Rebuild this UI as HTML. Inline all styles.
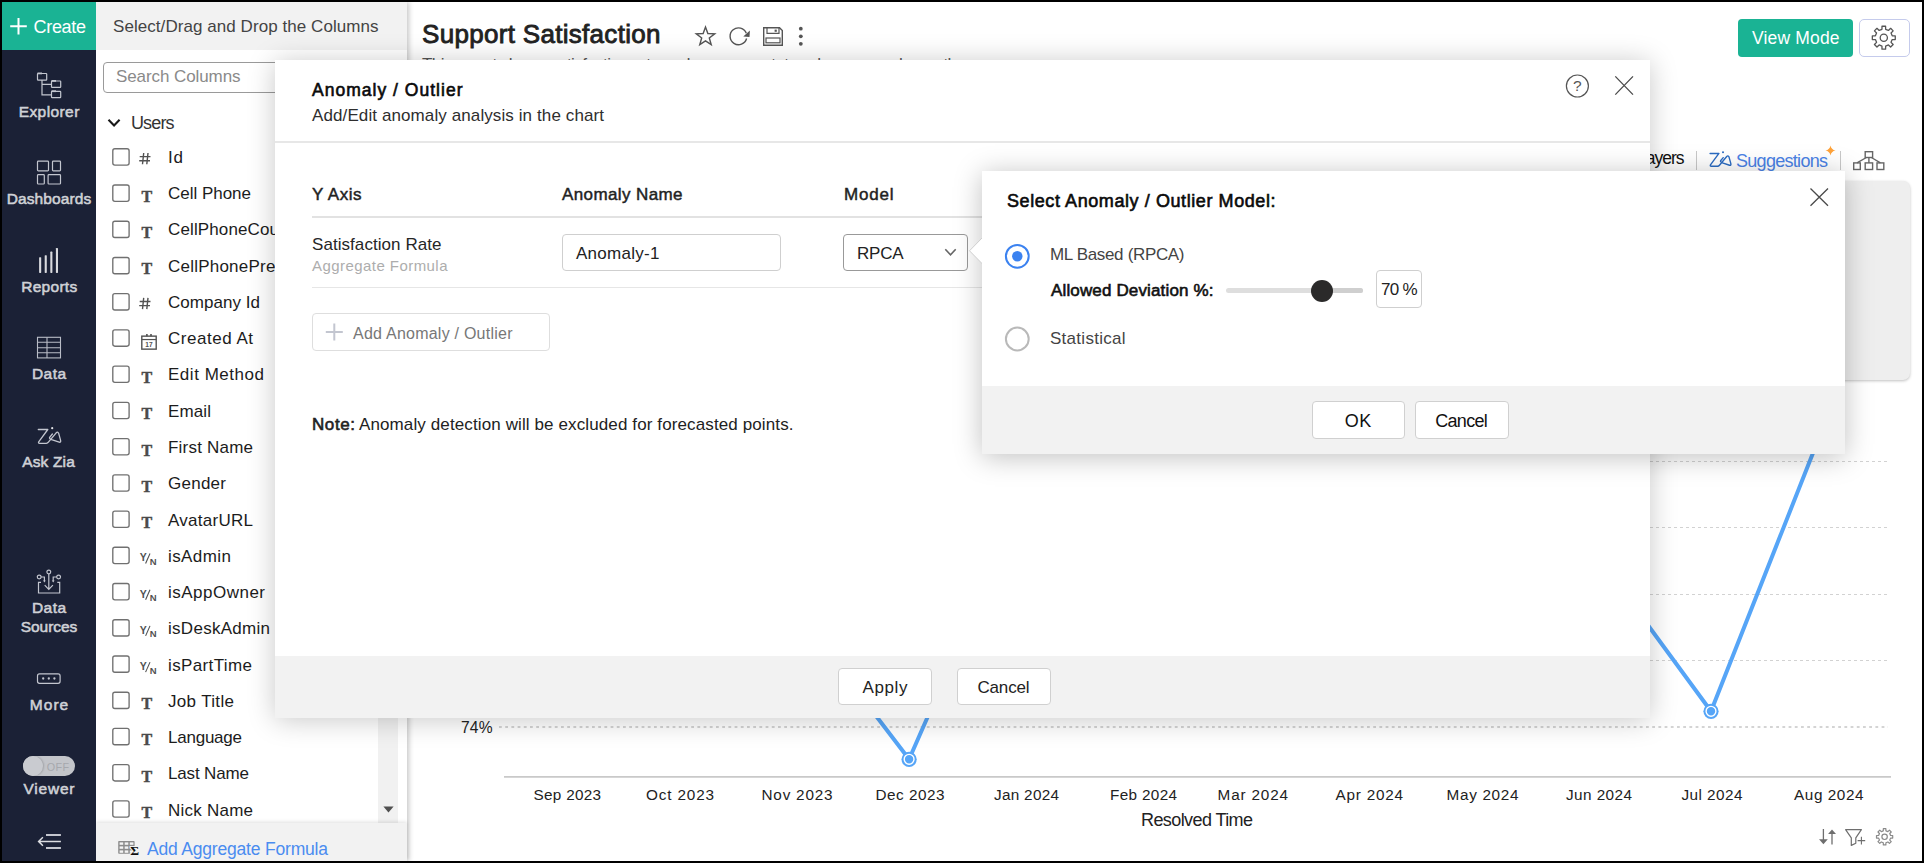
<!DOCTYPE html><html><head><meta charset="utf-8"><title>Support Satisfaction</title><style>
html,body{margin:0;padding:0;}
body{width:1924px;height:863px;overflow:hidden;background:#fff;font-family:"Liberation Sans", sans-serif;position:relative;}
#root{position:absolute;left:0;top:0;width:1924px;height:863px;overflow:hidden;}
svg.tx{position:absolute;left:0;top:0;pointer-events:none;font-family:"Liberation Sans", sans-serif;}
</style></head><body><div id="root">
<svg class="tx" width="1924" height="863" viewBox="0 0 1924 863" fill="none"><text x="422" y="43" font-size="26" fill="#222" textLength="238.5" lengthAdjust="spacing" stroke="#222" stroke-width="0.85">Support Satisfaction</text>
<text x="422" y="70" font-size="17" fill="#555" textLength="535" lengthAdjust="spacing">This report shows satisfaction rate and response status changes each month</text>
<path d="M705.50 27.10 L707.85 33.56 L714.73 33.80 L709.30 38.04 L711.20 44.65 L705.50 40.80 L699.80 44.65 L701.70 38.04 L696.27 33.80 L703.15 33.56 Z" stroke="#555" stroke-width="1.4" stroke-linejoin="miter"/>
<path d="M746.3 33.2 A8.4 8.4 0 1 0 746.6 38.5" stroke="#555" stroke-width="1.4"/><path d="M749.9 30.4 L749.5 37 L743.3 36.5 Z" fill="#555"/>
<path d="M763.7 27.7 H779.5 L782.3 30.5 V45.2 H763.7 Z" stroke="#555" stroke-width="1.4"/><path d="M767 27.7 V33.3 H779 V27.7" stroke="#555" stroke-width="1.2"/><rect x="774.6" y="29.6" width="2.2" height="2.2" fill="#555"/><rect x="766" y="38" width="14" height="4.8" stroke="#555" stroke-width="1.2"/>
<circle cx="800.8" cy="28.7" r="1.9" fill="#555"/><circle cx="800.8" cy="36.3" r="1.9" fill="#555"/><circle cx="800.8" cy="43.8" r="1.9" fill="#555"/></svg>
<div style="position:absolute;left:1738px;top:19px;width:115px;height:38px;background:#1ab394;border-radius:4px;"></div>
<svg class="tx" width="1924" height="863" viewBox="0 0 1924 863" fill="none"><text x="1752" y="44" font-size="17.5" fill="#fff" textLength="87.5" lengthAdjust="spacing">View Mode</text></svg>
<div style="position:absolute;left:1859px;top:19px;width:49px;height:36px;border:1px solid #c5cbec;border-radius:5px;background:#fff;"></div>
<svg class="tx" width="1924" height="863" viewBox="0 0 1924 863" fill="none"><path d="M1881.96 29.30 L1882.00 26.24 L1885.60 26.24 L1885.64 29.30 L1888.44 30.46 L1890.63 28.33 L1893.17 30.87 L1891.04 33.06 L1892.20 35.86 L1895.26 35.90 L1895.26 39.50 L1892.20 39.54 L1891.04 42.34 L1893.17 44.53 L1890.63 47.07 L1888.44 44.94 L1885.64 46.10 L1885.60 49.16 L1882.00 49.16 L1881.96 46.10 L1879.16 44.94 L1876.97 47.07 L1874.43 44.53 L1876.56 42.34 L1875.40 39.54 L1872.34 39.50 L1872.34 35.90 L1875.40 35.86 L1876.56 33.06 L1874.43 30.87 L1876.97 28.33 L1879.16 30.46 Z" stroke="#555" stroke-width="1.3" stroke-linejoin="round"/><circle cx="1883.8" cy="37.7" r="3.6" stroke="#555" stroke-width="1.3"/>
<text x="1637" y="164" font-size="17.5" fill="#111" textLength="47.5" lengthAdjust="spacing">Layers</text></svg>
<div style="position:absolute;left:1696px;top:151px;width:1px;height:19px;background:#c8c8c8;"></div>
<svg class="tx" width="1924" height="863" viewBox="0 0 1924 863" fill="none"><g transform="translate(1709.9 151.3) scale(0.93)"><path d="M0.2 2.3 H9.7 L0.6 14.6 Q-0.1 16.1 1.5 16.1 H8.3 Q9.5 16.1 10.3 15 L18.1 5.6 Q19.5 4 20.5 6 L22.5 13.2 Q23 15.4 21.1 15 L13.5 12.5 Q10.9 11.4 11.5 10.2 L14.3 6.8" stroke="#2a6bc2" stroke-width="1.5" stroke-linecap="round" stroke-linejoin="round"/><circle cx="14.1" cy="1" r="1.1" fill="#2a6bc2"/></g>
<text x="1736" y="167" font-size="18" fill="#4a82e6" textLength="92" lengthAdjust="spacing">Suggestions</text>
<path d="M1830.5 145.5 Q1831.3 149.7 1835.5 150.5 Q1831.3 151.3 1830.5 155.5 Q1829.7 151.3 1825.5 150.5 Q1829.7 149.7 1830.5 145.5 Z" fill="#ffa33a"/></svg>
<div style="position:absolute;left:1840px;top:151px;width:1px;height:19px;background:#c8c8c8;"></div>
<svg class="tx" width="1924" height="863" viewBox="0 0 1924 863" fill="none"><g stroke="#666" stroke-width="1.4"><rect x="1865.2" y="151.7" width="7.4" height="5.8"/><rect x="1853.7" y="162.9" width="6.6" height="6.6"/><rect x="1865.2" y="162.9" width="7.4" height="6.6"/><rect x="1877" y="162.9" width="6.8" height="6.6"/><path d="M1868.9 157.5 V162.9 M1866.4 157.5 L1857 162.9 M1871.4 157.5 L1880.4 162.9"/></g></svg>
<div style="position:absolute;left:1700px;top:181px;width:210px;height:199px;background:#eeeeee;border-radius:7px;box-shadow:0 1px 3px rgba(0,0,0,.25);"></div>
<svg class="tx" width="1924" height="863" viewBox="0 0 1924 863" fill="none"><line x1="504" y1="461.5" x2="1888" y2="461.5" stroke="#d2d2d2" stroke-width="1" stroke-dasharray="3 3"/><line x1="504" y1="527.5" x2="1888" y2="527.5" stroke="#d2d2d2" stroke-width="1" stroke-dasharray="3 3"/><line x1="504" y1="594.5" x2="1888" y2="594.5" stroke="#d2d2d2" stroke-width="1" stroke-dasharray="3 3"/><line x1="504" y1="660.5" x2="1888" y2="660.5" stroke="#d2d2d2" stroke-width="1" stroke-dasharray="3 3"/><line x1="499" y1="727" x2="1888" y2="727" stroke="#c6c6c6" stroke-width="1.7" stroke-dasharray="2.8 3.4"/><line x1="504" y1="776.9" x2="1891" y2="776.9" stroke="#c9c9c9" stroke-width="1.8"/><polyline points="797,612.3 909.1,759.3 1026,492.5 1598,557 1711,711.3 1828,415" stroke="#56a5f7" stroke-width="4" fill="none" stroke-linejoin="round"/><circle cx="909.1" cy="759.3" r="7.6" fill="#56a5f7"/><circle cx="909.1" cy="759.3" r="4.9" fill="#56a5f7" stroke="#fff" stroke-width="1.4"/><circle cx="1711" cy="711.3" r="7.6" fill="#56a5f7"/><circle cx="1711" cy="711.3" r="4.9" fill="#56a5f7" stroke="#fff" stroke-width="1.4"/>
<text x="461" y="733" font-size="15.6" fill="#222" textLength="31.5" lengthAdjust="spacing">74%</text>
<text x="567.3" y="800" font-size="15.3" fill="#222" text-anchor="middle" textLength="67.5" lengthAdjust="spacing">Sep 2023</text>
<text x="680" y="800" font-size="15.3" fill="#222" text-anchor="middle" textLength="68" lengthAdjust="spacing">Oct 2023</text>
<text x="797" y="800" font-size="15.3" fill="#222" text-anchor="middle" textLength="71" lengthAdjust="spacing">Nov 2023</text>
<text x="910" y="800" font-size="15.3" fill="#222" text-anchor="middle" textLength="69" lengthAdjust="spacing">Dec 2023</text>
<text x="1026.5" y="800" font-size="15.3" fill="#222" text-anchor="middle" textLength="65" lengthAdjust="spacing">Jan 2024</text>
<text x="1143.5" y="800" font-size="15.3" fill="#222" text-anchor="middle" textLength="67" lengthAdjust="spacing">Feb 2024</text>
<text x="1252.8" y="800" font-size="15.3" fill="#222" text-anchor="middle" textLength="70.5" lengthAdjust="spacing">Mar 2024</text>
<text x="1369.3" y="800" font-size="15.3" fill="#222" text-anchor="middle" textLength="67.5" lengthAdjust="spacing">Apr 2024</text>
<text x="1482.5" y="800" font-size="15.3" fill="#222" text-anchor="middle" textLength="72" lengthAdjust="spacing">May 2024</text>
<text x="1599" y="800" font-size="15.3" fill="#222" text-anchor="middle" textLength="66" lengthAdjust="spacing">Jun 2024</text>
<text x="1712" y="800" font-size="15.3" fill="#222" text-anchor="middle" textLength="61" lengthAdjust="spacing">Jul 2024</text>
<text x="1828.8" y="800" font-size="15.3" fill="#222" text-anchor="middle" textLength="69.5" lengthAdjust="spacing">Aug 2024</text>
<text x="1197" y="826" font-size="18" fill="#222" text-anchor="middle" textLength="112" lengthAdjust="spacing">Resolved Time</text>
<path d="M1823.4 829 V840" stroke="#6e6e6e" stroke-width="1.3"/><path d="M1819 839.3 H1827.8 L1823.4 844.2 Z" fill="#6e6e6e"/><path d="M1832 844.4 V833.5" stroke="#6e6e6e" stroke-width="1.3"/><path d="M1828.1 834 H1836 L1832 829.4 Z" fill="#6e6e6e"/>
<path d="M1845.6 829.7 H1861.4 L1855.8 837.8 V843.2 L1851.3 845.4 V837.8 Z" stroke="#6e6e6e" stroke-width="1.2" stroke-linejoin="round"/><path d="M1861.4 836.8 V844.4 M1857.6 840.6 H1865.2" stroke="#6e6e6e" stroke-width="1.1"/>
<path d="M1883.29 830.84 L1883.33 828.70 L1885.87 828.70 L1885.91 830.84 L1887.89 831.66 L1889.43 830.17 L1891.23 831.97 L1889.74 833.51 L1890.56 835.49 L1892.70 835.53 L1892.70 838.07 L1890.56 838.11 L1889.74 840.09 L1891.23 841.63 L1889.43 843.43 L1887.89 841.94 L1885.91 842.76 L1885.87 844.90 L1883.33 844.90 L1883.29 842.76 L1881.31 841.94 L1879.77 843.43 L1877.97 841.63 L1879.46 840.09 L1878.64 838.11 L1876.50 838.07 L1876.50 835.53 L1878.64 835.49 L1879.46 833.51 L1877.97 831.97 L1879.77 830.17 L1881.31 831.66 Z" stroke="#8a8a8a" stroke-width="1.2" stroke-linejoin="round"/><circle cx="1884.6" cy="836.8" r="2.7" stroke="#8a8a8a" stroke-width="1.2"/></svg>
<div style="position:absolute;left:96px;top:2px;width:311px;height:859px;background:#fff;box-shadow:2px 0 5px rgba(0,0,0,.22);"></div>
<div style="position:absolute;left:96px;top:2px;width:311px;height:48px;background:#f2f2f2;"></div>
<svg class="tx" width="1924" height="863" viewBox="0 0 1924 863" fill="none"><text x="113" y="32" font-size="17" fill="#444" textLength="265.5" lengthAdjust="spacing">Select/Drag and Drop the Columns</text></svg>
<div style="position:absolute;left:103px;top:62px;width:290px;height:29px;border:1px solid #9a9a9a;border-radius:4px;background:#fff;"></div>
<svg class="tx" width="1924" height="863" viewBox="0 0 1924 863" fill="none"><text x="116" y="82" font-size="17" fill="#8a8a8a" textLength="124.5" lengthAdjust="spacing">Search Columns</text>
<text x="131" y="129" font-size="18" fill="#333" textLength="43.5" lengthAdjust="spacing">Users</text>
<path d="M108.5 119.7 L114.05 125.5 L119.6 119.7" stroke="#1a1a1a" stroke-width="2.1"/>
<rect x="112.8" y="148.78" width="16.3" height="16.3" rx="2.1" fill="#fff" stroke="#707070" stroke-width="1.35"/>
<text x="168" y="163" font-size="17" fill="#1c1c1c" textLength="15" lengthAdjust="spacing">Id</text>
<g stroke="#525252" stroke-width="1.4"><path d="M143.7 152.95 L142.5 164.25 M148 152.95 L146.8 164.25"/><path d="M139.7 156.65 H150.5 M139.2 160.75 H150"/></g>
<rect x="112.8" y="185.01" width="16.3" height="16.3" rx="2.1" fill="#fff" stroke="#707070" stroke-width="1.35"/>
<text x="168" y="199" font-size="17" fill="#1c1c1c" textLength="83" lengthAdjust="spacing">Cell Phone</text>
<text x="141.4" y="202" font-size="16" fill="#4a4a4a" font-weight="700" font-family="Liberation Serif, serif" stroke="#4a4a4a" stroke-width="0.45">T</text>
<rect x="112.8" y="221.24" width="16.3" height="16.3" rx="2.1" fill="#fff" stroke="#707070" stroke-width="1.35"/>
<text x="168" y="235" font-size="17" fill="#1c1c1c" textLength="181" lengthAdjust="spacing">CellPhoneCountryCode</text>
<text x="141.4" y="238" font-size="16" fill="#4a4a4a" font-weight="700" font-family="Liberation Serif, serif" stroke="#4a4a4a" stroke-width="0.45">T</text>
<rect x="112.8" y="257.46" width="16.3" height="16.3" rx="2.1" fill="#fff" stroke="#707070" stroke-width="1.35"/>
<text x="168" y="272" font-size="17" fill="#1c1c1c" textLength="125" lengthAdjust="spacing">CellPhonePrefix</text>
<text x="141.4" y="274" font-size="16" fill="#4a4a4a" font-weight="700" font-family="Liberation Serif, serif" stroke="#4a4a4a" stroke-width="0.45">T</text>
<rect x="112.8" y="293.69" width="16.3" height="16.3" rx="2.1" fill="#fff" stroke="#707070" stroke-width="1.35"/>
<text x="168" y="308" font-size="17" fill="#1c1c1c" textLength="92" lengthAdjust="spacing">Company Id</text>
<g stroke="#525252" stroke-width="1.4"><path d="M143.7 297.86 L142.5 309.16 M148 297.86 L146.8 309.16"/><path d="M139.7 301.56 H150.5 M139.2 305.66 H150"/></g>
<rect x="112.8" y="329.92" width="16.3" height="16.3" rx="2.1" fill="#fff" stroke="#707070" stroke-width="1.35"/>
<text x="168" y="344" font-size="17" fill="#1c1c1c" textLength="85" lengthAdjust="spacing">Created At</text>
<g stroke="#525252"><rect x="141.8" y="336.14" width="14.4" height="13" stroke-width="1.4"/><line x1="141.8" y1="339.54" x2="156.2" y2="339.54" stroke-width="1.2"/><line x1="146.9" y1="333.94" x2="146.9" y2="336.34" stroke-width="1.6"/><line x1="151" y1="333.94" x2="151" y2="336.34" stroke-width="1.6"/></g>
<text x="149" y="347" font-size="6.6" fill="#525252" font-weight="700" text-anchor="middle">17</text>
<rect x="112.8" y="366.15" width="16.3" height="16.3" rx="2.1" fill="#fff" stroke="#707070" stroke-width="1.35"/>
<text x="168" y="380" font-size="17" fill="#1c1c1c" textLength="96" lengthAdjust="spacing">Edit Method</text>
<text x="141.4" y="383" font-size="16" fill="#4a4a4a" font-weight="700" font-family="Liberation Serif, serif" stroke="#4a4a4a" stroke-width="0.45">T</text>
<rect x="112.8" y="402.38" width="16.3" height="16.3" rx="2.1" fill="#fff" stroke="#707070" stroke-width="1.35"/>
<text x="168" y="417" font-size="17" fill="#1c1c1c" textLength="43" lengthAdjust="spacing">Email</text>
<text x="141.4" y="419" font-size="16" fill="#4a4a4a" font-weight="700" font-family="Liberation Serif, serif" stroke="#4a4a4a" stroke-width="0.45">T</text>
<rect x="112.8" y="438.60" width="16.3" height="16.3" rx="2.1" fill="#fff" stroke="#707070" stroke-width="1.35"/>
<text x="168" y="453" font-size="17" fill="#1c1c1c" textLength="85" lengthAdjust="spacing">First Name</text>
<text x="141.4" y="456" font-size="16" fill="#4a4a4a" font-weight="700" font-family="Liberation Serif, serif" stroke="#4a4a4a" stroke-width="0.45">T</text>
<rect x="112.8" y="474.83" width="16.3" height="16.3" rx="2.1" fill="#fff" stroke="#707070" stroke-width="1.35"/>
<text x="168" y="489" font-size="17" fill="#1c1c1c" textLength="58" lengthAdjust="spacing">Gender</text>
<text x="141.4" y="492" font-size="16" fill="#4a4a4a" font-weight="700" font-family="Liberation Serif, serif" stroke="#4a4a4a" stroke-width="0.45">T</text>
<rect x="112.8" y="511.06" width="16.3" height="16.3" rx="2.1" fill="#fff" stroke="#707070" stroke-width="1.35"/>
<text x="168" y="526" font-size="17" fill="#1c1c1c" textLength="85" lengthAdjust="spacing">AvatarURL</text>
<text x="141.4" y="528" font-size="16" fill="#4a4a4a" font-weight="700" font-family="Liberation Serif, serif" stroke="#4a4a4a" stroke-width="0.45">T</text>
<rect x="112.8" y="547.29" width="16.3" height="16.3" rx="2.1" fill="#fff" stroke="#707070" stroke-width="1.35"/>
<text x="168" y="562" font-size="17" fill="#1c1c1c" textLength="63" lengthAdjust="spacing">isAdmin</text>
<text x="139.8" y="561" font-size="10.5" fill="#525252" font-weight="700">Y</text>
<path d="M150 553.5 L145.6 563.5" stroke="#525252" stroke-width="1.1"/>
<text x="149.7" y="565" font-size="9.5" fill="#525252" font-weight="700">N</text>
<rect x="112.8" y="583.52" width="16.3" height="16.3" rx="2.1" fill="#fff" stroke="#707070" stroke-width="1.35"/>
<text x="168" y="598" font-size="17" fill="#1c1c1c" textLength="97" lengthAdjust="spacing">isAppOwner</text>
<text x="139.8" y="598" font-size="10.5" fill="#525252" font-weight="700">Y</text>
<path d="M150 589.7 L145.6 599.7" stroke="#525252" stroke-width="1.1"/>
<text x="149.7" y="601" font-size="9.5" fill="#525252" font-weight="700">N</text>
<rect x="112.8" y="619.74" width="16.3" height="16.3" rx="2.1" fill="#fff" stroke="#707070" stroke-width="1.35"/>
<text x="168" y="634" font-size="17" fill="#1c1c1c" textLength="102" lengthAdjust="spacing">isDeskAdmin</text>
<text x="139.8" y="634" font-size="10.5" fill="#525252" font-weight="700">Y</text>
<path d="M150 625.9 L145.6 635.9" stroke="#525252" stroke-width="1.1"/>
<text x="149.7" y="637" font-size="9.5" fill="#525252" font-weight="700">N</text>
<rect x="112.8" y="655.97" width="16.3" height="16.3" rx="2.1" fill="#fff" stroke="#707070" stroke-width="1.35"/>
<text x="168" y="671" font-size="17" fill="#1c1c1c" textLength="84" lengthAdjust="spacing">isPartTime</text>
<text x="139.8" y="670" font-size="10.5" fill="#525252" font-weight="700">Y</text>
<path d="M150 662.1 L145.6 672.1" stroke="#525252" stroke-width="1.1"/>
<text x="149.7" y="674" font-size="9.5" fill="#525252" font-weight="700">N</text>
<rect x="112.8" y="692.20" width="16.3" height="16.3" rx="2.1" fill="#fff" stroke="#707070" stroke-width="1.35"/>
<text x="168" y="707" font-size="17" fill="#1c1c1c" textLength="66" lengthAdjust="spacing">Job Title</text>
<text x="141.4" y="709" font-size="16" fill="#4a4a4a" font-weight="700" font-family="Liberation Serif, serif" stroke="#4a4a4a" stroke-width="0.45">T</text>
<rect x="112.8" y="728.43" width="16.3" height="16.3" rx="2.1" fill="#fff" stroke="#707070" stroke-width="1.35"/>
<text x="168" y="743" font-size="17" fill="#1c1c1c" textLength="74" lengthAdjust="spacing">Language</text>
<text x="141.4" y="745" font-size="16" fill="#4a4a4a" font-weight="700" font-family="Liberation Serif, serif" stroke="#4a4a4a" stroke-width="0.45">T</text>
<rect x="112.8" y="764.66" width="16.3" height="16.3" rx="2.1" fill="#fff" stroke="#707070" stroke-width="1.35"/>
<text x="168" y="779" font-size="17" fill="#1c1c1c" textLength="81" lengthAdjust="spacing">Last Name</text>
<text x="141.4" y="782" font-size="16" fill="#4a4a4a" font-weight="700" font-family="Liberation Serif, serif" stroke="#4a4a4a" stroke-width="0.45">T</text>
<rect x="112.8" y="800.88" width="16.3" height="16.3" rx="2.1" fill="#fff" stroke="#707070" stroke-width="1.35"/>
<text x="168" y="816" font-size="17" fill="#1c1c1c" textLength="85" lengthAdjust="spacing">Nick Name</text>
<text x="141.4" y="818" font-size="16" fill="#4a4a4a" font-weight="700" font-family="Liberation Serif, serif" stroke="#4a4a4a" stroke-width="0.45">T</text></svg>
<div style="position:absolute;left:378px;top:96px;width:20px;height:727px;background:#f1f1f1;"></div>
<svg class="tx" width="1924" height="863" viewBox="0 0 1924 863" fill="none"><path d="M383.4 806.4 L393.6 806.4 L388.5 812.4 Z" fill="#505050"/></svg>
<div style="position:absolute;left:96px;top:823px;width:311px;height:38px;background:#f2f2f2;box-shadow:0 -1px 4px rgba(0,0,0,.13);"></div>
<svg class="tx" width="1924" height="863" viewBox="0 0 1924 863" fill="none"><rect x="118.2" y="841" width="16.4" height="12.8" rx="0.8" fill="#8c8c8c"/><rect x="119.6" y="842.4" width="3.6" height="2.4" fill="#f4f4f4"/><rect x="124.7" y="842.4" width="3.6" height="2.4" fill="#f4f4f4"/><rect x="129.8" y="842.4" width="3.6" height="2.4" fill="#f4f4f4"/><rect x="119.6" y="846.4" width="3.6" height="2.4" fill="#f4f4f4"/><rect x="124.7" y="846.4" width="3.6" height="2.4" fill="#f4f4f4"/><rect x="129.8" y="846.4" width="3.6" height="2.4" fill="#f4f4f4"/><rect x="119.6" y="850.4" width="3.6" height="2.4" fill="#f4f4f4"/><rect x="124.7" y="850.4" width="3.6" height="2.4" fill="#f4f4f4"/><rect x="129.8" y="850.4" width="3.6" height="2.4" fill="#f4f4f4"/>
<text x="130.3" y="855.3" font-size="13.5" fill="#111" font-weight="700" font-family="Liberation Serif, serif" stroke="#f2f2f2" stroke-width="2.2" paint-order="stroke">Σ</text>
<text x="147" y="855" font-size="17.5" fill="#4a8cf0" textLength="181" lengthAdjust="spacing">Add Aggregate Formula</text></svg>
<div style="position:absolute;left:2px;top:2px;width:94px;height:859px;background:#1b2136;"></div>
<div style="position:absolute;left:2px;top:2px;width:94px;height:48px;background:#1ab394;"></div>
<svg class="tx" width="1924" height="863" viewBox="0 0 1924 863" fill="none"><text x="33.5" y="32.5" font-size="18" fill="#fff" textLength="52.5" lengthAdjust="spacing">Create</text>
<path d="M18.5 18 V34.5 M10.2 26.2 H26.8" stroke="#fff" stroke-width="2"/>
<text x="49" y="117" font-size="15.5" fill="#cfd1d6" text-anchor="middle" textLength="60.6" lengthAdjust="spacing" stroke="#cfd1d6" stroke-width="0.55">Explorer</text>
<text x="49" y="204" font-size="15.5" fill="#cfd1d6" text-anchor="middle" textLength="84.6" lengthAdjust="spacing" stroke="#cfd1d6" stroke-width="0.55">Dashboards</text>
<text x="49.2" y="292" font-size="15.5" fill="#cfd1d6" text-anchor="middle" textLength="56" lengthAdjust="spacing" stroke="#cfd1d6" stroke-width="0.55">Reports</text>
<text x="49" y="379" font-size="15.5" fill="#cfd1d6" text-anchor="middle" textLength="34" lengthAdjust="spacing" stroke="#cfd1d6" stroke-width="0.55">Data</text>
<text x="48.5" y="467" font-size="15.5" fill="#cfd1d6" text-anchor="middle" textLength="52.5" lengthAdjust="spacing" stroke="#cfd1d6" stroke-width="0.55">Ask Zia</text>
<text x="49" y="613" font-size="15.5" fill="#cfd1d6" text-anchor="middle" textLength="34" lengthAdjust="spacing" stroke="#cfd1d6" stroke-width="0.55">Data</text>
<text x="49" y="632" font-size="15.5" fill="#cfd1d6" text-anchor="middle" textLength="56.6" lengthAdjust="spacing" stroke="#cfd1d6" stroke-width="0.55">Sources</text>
<text x="49" y="710" font-size="15.5" fill="#cfd1d6" text-anchor="middle" textLength="38.4" lengthAdjust="spacing" stroke="#cfd1d6" stroke-width="0.55">More</text>
<text x="49" y="794" font-size="15.5" fill="#cfd1d6" text-anchor="middle" textLength="51" lengthAdjust="spacing" stroke="#cfd1d6" stroke-width="0.55">Viewer</text>
<g stroke="#c3c6cf" stroke-width="1.2"><rect x="37.5" y="73.5" width="9.2" height="6.6" rx="0.6"/><rect x="51.5" y="81" width="9.2" height="6.4" rx="0.6"/><rect x="51.5" y="91.3" width="9.2" height="6.4" rx="0.6"/><path d="M42 80.1 V94.8 H51.5 M42 84.4 H51.5"/><path d="M37.5 73.4 H42" stroke-width="1.8"/><path d="M51.5 80.9 H56" stroke-width="1.8"/><path d="M51.5 91.2 H56" stroke-width="1.8"/></g>
<g stroke="#c3c6cf" stroke-width="1.2"><rect x="37.5" y="161.2" width="11" height="9.6" rx="0.8"/><rect x="52.5" y="161.2" width="8" height="9.6" rx="0.8"/><rect x="37.5" y="174.6" width="6.8" height="9.4" rx="0.8"/><rect x="48.1" y="174.6" width="12.4" height="9.4" rx="0.8"/></g>
<g fill="#d9dade"><rect x="39.1" y="257.2" width="2.1" height="15.7" rx="0.6"/><rect x="44.7" y="255.2" width="2.1" height="17.7" rx="0.6"/><rect x="50.3" y="251.6" width="2.1" height="21.3" rx="0.6"/><rect x="55.9" y="248" width="2.1" height="24.9" rx="0.6"/></g>
<g stroke="#b9bcc6" stroke-width="1.1"><rect x="37.5" y="337.3" width="23" height="20.6"/><path d="M37.5 342.2 H60.5 M37.5 347.7 H60.5 M37.5 352.8 H60.5 M47 337.3 V357.9"/></g>
<g transform="translate(38.1 427.2) scale(1)"><path d="M0.2 2.3 H9.7 L0.6 14.6 Q-0.1 16.1 1.5 16.1 H8.3 Q9.5 16.1 10.3 15 L18.1 5.6 Q19.5 4 20.5 6 L22.5 13.2 Q23 15.4 21.1 15 L13.5 12.5 Q10.9 11.4 11.5 10.2 L14.3 6.8" stroke="#c3c6cf" stroke-width="1.3" stroke-linecap="round" stroke-linejoin="round"/><circle cx="14.1" cy="1" r="1.1" fill="#e4e5e8"/></g>
<g stroke="#c3c6cf" stroke-width="1.2"><path d="M41 582.3 H38.5 V593 H59.7 V582.3 H57.3"/><path d="M48.8 574 V589.2 M44.7 585.2 L48.8 589.4 L52.9 585.2"/><circle cx="48.8" cy="572" r="1.9"/><circle cx="39.2" cy="577" r="1.9"/><circle cx="58.6" cy="577" r="1.9"/><path d="M41.1 577 H44.4 V581 M56.7 577 H53.2 V581"/></g><path d="M43 580.4 H45.8 L44.4 582.6 Z M51.8 580.4 H54.6 L53.2 582.6 Z" fill="#c3c6cf"/>
<rect x="37.5" y="673.9" width="22.6" height="9.4" rx="2" stroke="#c3c6cf" stroke-width="1.2"/><circle cx="43.2" cy="678.5" r="1.15" fill="#c3c6cf"/><circle cx="48.8" cy="678.5" r="1.15" fill="#c3c6cf"/><circle cx="54.4" cy="678.5" r="1.15" fill="#c3c6cf"/></svg>
<div style="position:absolute;left:23px;top:756px;width:52px;height:20px;background:#c3c5ca;border-radius:10px;"></div>
<div style="position:absolute;left:23px;top:756px;width:19.5px;height:20px;background:#c9cbd0;border-radius:50%;box-shadow:1px 0 2px rgba(0,0,0,.18);"></div>
<svg class="tx" width="1924" height="863" viewBox="0 0 1924 863" fill="none"><text x="46.8" y="770.6" font-size="10.8" fill="#a6a8ad" textLength="22.4" lengthAdjust="spacing">OFF</text>
<path d="M46 835 H60.9 M46 848 H60.9" stroke="#c4c6ce" stroke-width="2"/><path d="M38.6 841.4 H60.9 M42.9 837.2 L38.6 841.4 L42.9 845.7" stroke="#dcdde1" stroke-width="1.5"/></svg>
<div style="position:absolute;left:275px;top:60px;width:1375px;height:658px;background:#fff;box-shadow:0 2px 26px 0 rgba(0,0,0,.22);"></div>
<svg class="tx" width="1924" height="863" viewBox="0 0 1924 863" fill="none"><text x="312" y="96" font-size="17.5" fill="#0a0a0a" textLength="150.5" lengthAdjust="spacing" stroke="#0a0a0a" stroke-width="0.6">Anomaly / Outlier</text>
<text x="312" y="121" font-size="17" fill="#2e2e2e" textLength="292" lengthAdjust="spacing">Add/Edit anomaly analysis in the chart</text></svg>
<div style="position:absolute;left:275px;top:141px;width:1375px;height:2px;background:#e7e7e7;"></div>
<svg class="tx" width="1924" height="863" viewBox="0 0 1924 863" fill="none"><circle cx="1577.4" cy="86" r="11" stroke="#555" stroke-width="1.2"/>
<text x="1577.4" y="91.4" font-size="15.5" fill="#555" text-anchor="middle">?</text>
<path d="M1615.3 76.4 L1633 94.6 M1633 76.4 L1615.3 94.6" stroke="#4a4a4a" stroke-width="1.3"/>
<text x="312" y="200" font-size="17" fill="#222" textLength="49.5" lengthAdjust="spacing" stroke="#222" stroke-width="0.45">Y Axis</text>
<text x="562" y="200" font-size="17" fill="#222" textLength="120.5" lengthAdjust="spacing" stroke="#222" stroke-width="0.45">Anomaly Name</text>
<text x="844" y="200" font-size="17" fill="#222" textLength="49.5" lengthAdjust="spacing" stroke="#222" stroke-width="0.45">Model</text></svg>
<div style="position:absolute;left:312px;top:216.4px;width:1301px;height:1.6px;background:#e2e2e2;"></div>
<svg class="tx" width="1924" height="863" viewBox="0 0 1924 863" fill="none"><text x="312" y="250" font-size="17" fill="#262626" textLength="129.5" lengthAdjust="spacing">Satisfaction Rate</text>
<text x="312" y="271" font-size="15" fill="#adadad" textLength="135.5" lengthAdjust="spacing">Aggregate Formula</text></svg>
<div style="position:absolute;left:562px;top:234px;width:217px;height:35px;border:1px solid #cfcfcf;border-radius:4px;background:#fff;"></div>
<svg class="tx" width="1924" height="863" viewBox="0 0 1924 863" fill="none"><text x="576" y="259" font-size="17" fill="#222" textLength="83.5" lengthAdjust="spacing">Anomaly-1</text></svg>
<div style="position:absolute;left:843px;top:234px;width:123px;height:35px;border:1px solid #999;border-radius:4px;background:#fff;"></div>
<svg class="tx" width="1924" height="863" viewBox="0 0 1924 863" fill="none"><text x="857" y="259" font-size="17" fill="#222" textLength="46.5" lengthAdjust="spacing">RPCA</text>
<path d="M945.3 249.3 L950.5 254.8 L955.7 249.3" stroke="#666" stroke-width="1.6"/></svg>
<div style="position:absolute;left:312px;top:287.3px;width:1301px;height:1px;background:#e6e6e6;"></div>
<div style="position:absolute;left:312px;top:313px;width:236px;height:36px;border:1px solid #dedede;border-radius:4px;background:#fff;"></div>
<svg class="tx" width="1924" height="863" viewBox="0 0 1924 863" fill="none"><path d="M334.3 323.5 V340.5 M325.8 332 H342.8" stroke="#c3c6d0" stroke-width="2"/>
<text x="353" y="339" font-size="16" fill="#777" textLength="159.5" lengthAdjust="spacing">Add Anomaly / Outlier</text>
<text x="312" y="430" font-size="17" fill="#222" textLength="43" lengthAdjust="spacing" stroke="#222" stroke-width="0.6">Note:</text>
<text x="359" y="430" font-size="17" fill="#222" textLength="434.5" lengthAdjust="spacing">Anomaly detection will be excluded for forecasted points.</text></svg>
<div style="position:absolute;left:275px;top:656px;width:1375px;height:62px;background:#f2f2f2;"></div>
<div style="position:absolute;left:838px;top:668px;width:92px;height:35px;border:1px solid #d0d0d0;border-radius:4px;background:#fff;"></div>
<svg class="tx" width="1924" height="863" viewBox="0 0 1924 863" fill="none"><text x="885" y="693" font-size="17" fill="#222" text-anchor="middle" textLength="45" lengthAdjust="spacing">Apply</text></svg>
<div style="position:absolute;left:957px;top:668px;width:92px;height:35px;border:1px solid #d0d0d0;border-radius:4px;background:#fff;"></div>
<svg class="tx" width="1924" height="863" viewBox="0 0 1924 863" fill="none"><text x="1003.5" y="693" font-size="17" fill="#222" text-anchor="middle" textLength="52" lengthAdjust="spacing">Cancel</text></svg>
<div style="position:absolute;left:982px;top:171px;width:863px;height:283px;background:#fff;box-shadow:0 3px 26px 0 rgba(0,0,0,.25);"></div>
<svg class="tx" width="1924" height="863" viewBox="0 0 1924 863" fill="none"><path d="M982.5 237.5 L969.5 250.8 L982.5 264 Z" fill="#fff" stroke="#cfcfcf" stroke-width="1"/><rect x="982" y="236" width="2" height="30" fill="#fff"/>
<text x="1007" y="207" font-size="18" fill="#0a0a0a" textLength="268.5" lengthAdjust="spacing" stroke="#0a0a0a" stroke-width="0.6">Select Anomaly / Outlier Model:</text>
<path d="M1810.5 188.5 L1828 205.7 M1828 188.5 L1810.5 205.7" stroke="#4a4a4a" stroke-width="1.3"/>
<circle cx="1017.3" cy="256.3" r="11.4" stroke="#3b82f0" stroke-width="2" fill="#fff"/><circle cx="1017.3" cy="256.3" r="5.2" fill="#3b82f0"/>
<text x="1050" y="260" font-size="17" fill="#444" textLength="134.5" lengthAdjust="spacing">ML Based (RPCA)</text>
<text x="1051" y="296" font-size="17" fill="#111" textLength="162.5" lengthAdjust="spacing" stroke="#111" stroke-width="0.6">Allowed Deviation %:</text></svg>
<div style="position:absolute;left:1226px;top:287.5px;width:137px;height:5px;background:#dedede;border-radius:3px;"></div>
<div style="position:absolute;left:1321px;top:287.5px;width:42px;height:5px;background:#cfcfcf;border-radius:3px;"></div>
<div style="position:absolute;left:1310.5px;top:280px;width:22px;height:22px;background:#2b2a2a;border-radius:50%;"></div>
<div style="position:absolute;left:1376px;top:270px;width:44px;height:36px;border:1px solid #cfcfcf;border-radius:4px;background:#fff;"></div>
<svg class="tx" width="1924" height="863" viewBox="0 0 1924 863" fill="none"><text x="1381" y="295" font-size="17" fill="#222" textLength="36.5" lengthAdjust="spacing">70 %</text>
<circle cx="1017.3" cy="339" r="11.4" stroke="#b9b9b9" stroke-width="2" fill="#fff"/>
<text x="1050" y="344" font-size="17" fill="#444" textLength="75.5" lengthAdjust="spacing">Statistical</text></svg>
<div style="position:absolute;left:982px;top:386px;width:863px;height:68px;background:#f2f2f2;"></div>
<div style="position:absolute;left:1312px;top:401px;width:91px;height:36px;border:1px solid #d0d0d0;border-radius:4px;background:#fff;"></div>
<svg class="tx" width="1924" height="863" viewBox="0 0 1924 863" fill="none"><text x="1358" y="427" font-size="18" fill="#111" text-anchor="middle" textLength="26.5" lengthAdjust="spacing">OK</text></svg>
<div style="position:absolute;left:1415px;top:401px;width:92px;height:36px;border:1px solid #d0d0d0;border-radius:4px;background:#fff;"></div>
<svg class="tx" width="1924" height="863" viewBox="0 0 1924 863" fill="none"><text x="1461.5" y="427" font-size="18" fill="#111" text-anchor="middle" textLength="52.5" lengthAdjust="spacing">Cancel</text></svg>
<div style="position:absolute;left:0px;top:0px;width:1920px;height:859px;border:2px solid #000;pointer-events:none;"></div>
</div></body></html>
